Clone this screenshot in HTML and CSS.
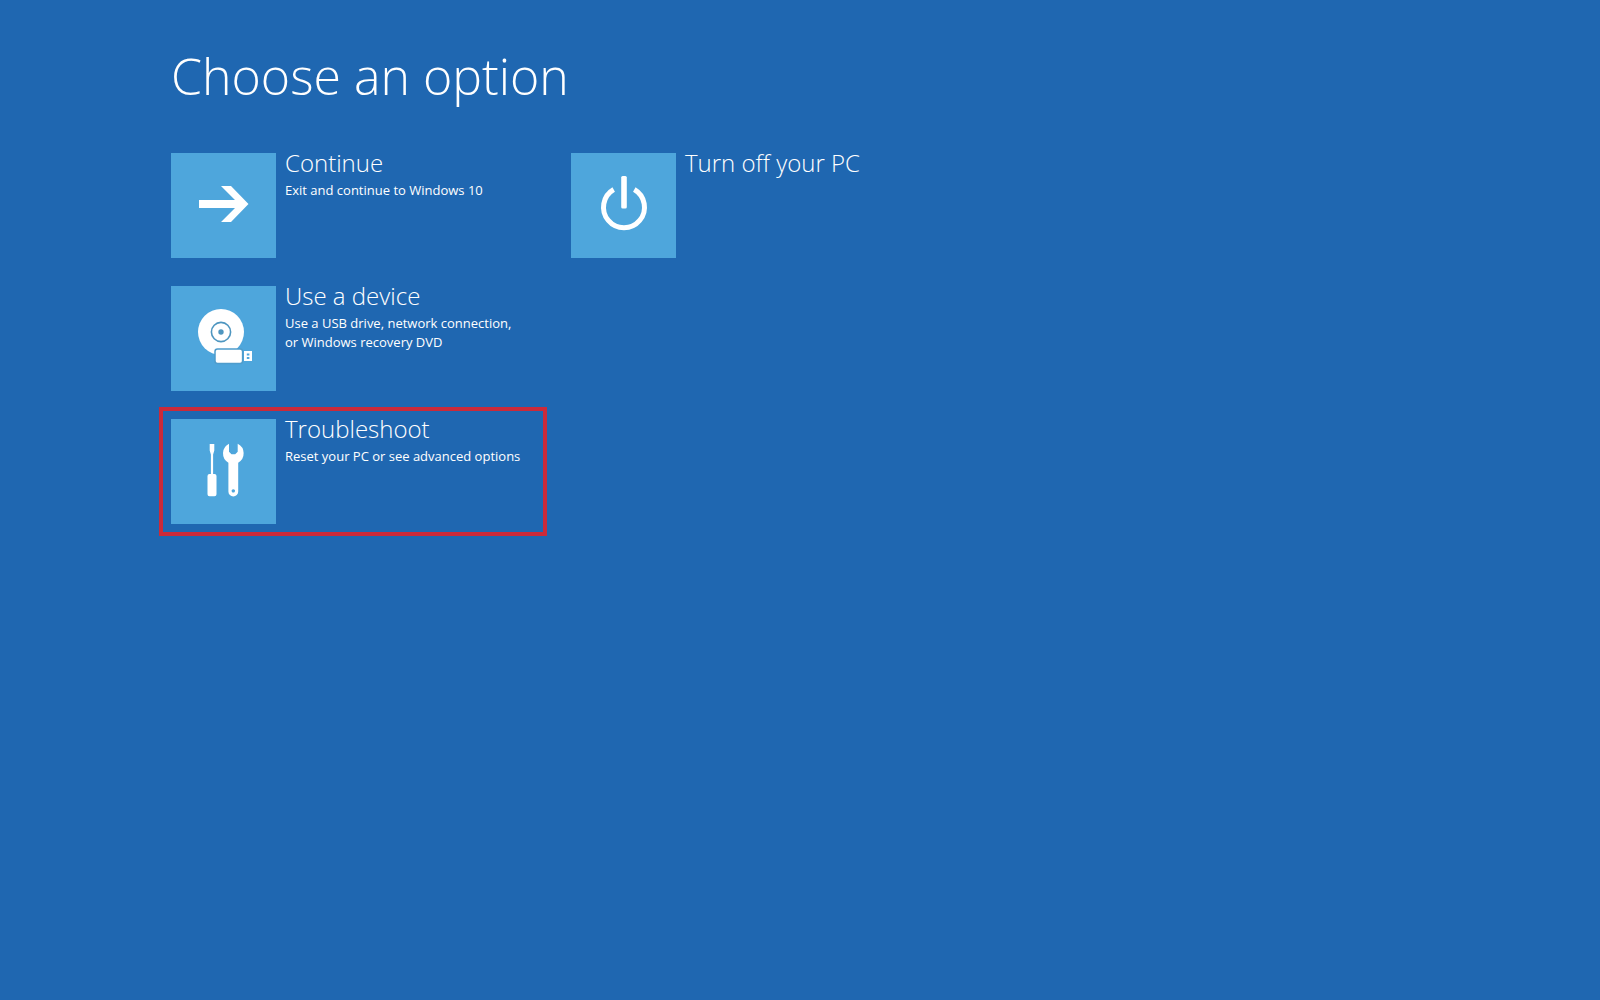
FILE: index.html
```html
<!DOCTYPE html>
<html lang="en">
<head>
    <meta charset="UTF-8">
    <meta name="viewport" content="width=device-width, initial-scale=1.0">
    <title>Choose an option</title>
    <link rel="stylesheet" href="styles.css">
</head>
<body>
<main class="screen">
  <h1 class="title">Choose an option</h1>

  <div class="options">
    <div class="column">
      <button class="option" type="button">
        <svg class="tile" viewBox="0 0 105 105" aria-hidden="true">
          <path d="M28 47H64L50 33H60L77.5 51L60 69H50L64 55H28z"/>
        </svg>
        <span class="text">
          <span class="name">Continue</span>
          <span class="info">Exit and continue to Windows 10</span>
        </span>
      </button>

      <button class="option" type="button">
        <svg class="tile" viewBox="0 0 105 105" aria-hidden="true">
          <!-- disc -->
          <circle cx="50" cy="46" r="23"/>
          <circle class="line" cx="50" cy="46" r="9.6"/>
          <circle class="hole" cx="50" cy="46" r="2.7"/>
          <!-- usb stick -->
          <rect class="cut" x="44" y="63" width="27.6" height="14.5" rx="2.5"/>
          <path fill-rule="evenodd" d="M73 65h8v10h-8zM75.800 67.500v2h2.600v-2zM75.800 71v2h2.600v-2z"/>
        </svg>
        <span class="text">
          <span class="name">Use a device</span>
          <span class="info">Use a USB drive, network connection,<br>or Windows recovery DVD</span>
        </span>
      </button>

      <button class="option selected" type="button">
        <svg class="tile" viewBox="0 0 105 105" aria-hidden="true">
          <!-- screwdriver -->
          <path d="M38.7 25h4.6v6.5l-1.2 4V55h1.4a2 2 0 0 1 2 2v18.3a2 2 0 0 1-2 2h-5a2 2 0 0 1-2-2V57a2 2 0 0 1 2-2h1.4V35.5l-1.2-4z"/>
          <!-- wrench -->
          <path fill-rule="evenodd" d="M58 24.8v8l2.5 2.500h3.700l2.500-2.500v-8A10.700 10.700 0 0 1 67.200 43.700V72.500a4.900 4.900 0 0 1-9.800 0V43.700A10.700 10.700 0 0 1 58 24.800zM62.300 70.200a1.700 1.700 0 1 0 .01 0z"/>
        </svg>
        <span class="text">
          <span class="name">Troubleshoot</span>
          <span class="info">Reset your PC or see advanced options</span>
        </span>
      </button>
    </div>

    <div class="column">
      <button class="option" type="button">
        <svg class="tile" viewBox="0 0 105 105" aria-hidden="true">
          <path class="ring" d="M42.7 36.500A20.500 20.500 0 1 0 63.300 36.500"/>
          <rect x="50.200" y="23" width="5.600" height="32.500" rx="1.500"/>
        </svg>
        <span class="text">
          <span class="name">Turn off your PC</span>
        </span>
      </button>
    </div>
  </div>
</main>
</body>
</html>
```
FILE: styles.css
```css
body {
  margin: 0;
  background-color: #1f67b1;
  color: white;
  font-family: "Open Sans", "Noto Sans", sans-serif;
}

.screen {
  padding: 40px 171px;
}

.title {
  margin: 0 0 41px;
  font-size: 50px;
  font-weight: 300;
  line-height: 72px;
}

.options {
  display: flex;
  gap: 36px;
}

.column {
  display: flex;
  flex-direction: column;
  gap: 28px;
}

.option {
  display: flex;
  align-items: flex-start;
  gap: 9px;
  width: 364px;
  padding: 0;
  border: none;
  background: none;
  color: inherit;
  font-family: inherit;
  text-align: left;
  cursor: pointer;
}

.selected {
  outline: 4px solid #cb2a3a;
  outline-offset: 8px;
}

.tile {
  flex: none;
  width: 105px;
  height: 105px;
  background-color: #4ea6dc;
  fill: white;
}

.line {
  fill: none;
  stroke: #4e96c0;
  stroke-width: 1.6;
}

.hole {
  fill: #4e96c0;
}

.cut {
  stroke: #4e9ccc;
  stroke-width: 1.5;
}

.ring {
  fill: none;
  stroke: white;
  stroke-width: 5;
}

.name {
  display: block;
  font-size: 24px;
  font-weight: 300;
  line-height: 20px;
  margin-bottom: 8px;
}

.info {
  display: block;
  font-size: 13px;
  line-height: 19px;
  white-space: nowrap;
}
```
